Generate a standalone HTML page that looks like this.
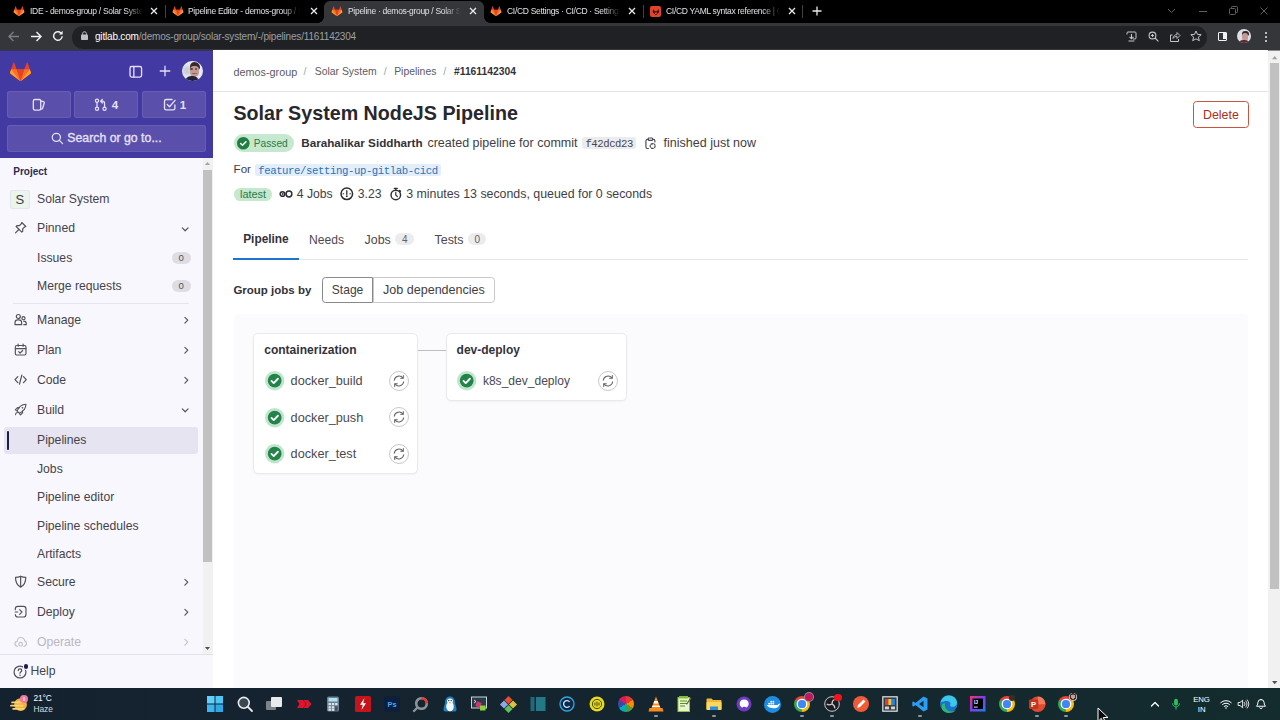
<!DOCTYPE html>
<html>
<head>
<meta charset="utf-8">
<title>Pipeline</title>
<style>
*{box-sizing:border-box;margin:0;padding:0}
html,body{width:1280px;height:720px;overflow:hidden;background:#fff;font-family:"Liberation Sans",sans-serif;}
body{position:relative}
.abs{position:absolute}
.t{position:absolute;white-space:nowrap;line-height:1;}
svg{position:absolute;overflow:visible}
/* ---------- browser chrome ---------- */
#tabbar{left:0;top:0;width:1280px;height:23px;background:#000}
#toolbar{left:0;top:23px;width:1280px;height:27px;background:#35363a}
#urlpill{left:72px;top:26px;width:1135px;height:22.5px;border-radius:11.25px;background:#202124}
.tab{position:absolute;top:0;height:23px;color:#dadce0;font-size:9px;letter-spacing:-0.1px}
.tab .tt{position:absolute;left:30px;top:7px;white-space:nowrap;overflow:hidden;line-height:10px;height:11px}
.tab .x{position:absolute;top:6px;width:9px;height:9px}
.tabsep{position:absolute;top:5px;width:1px;height:13px;background:#3f4145}
/* ---------- sidebar ---------- */
#sbtop{left:0;top:50px;width:213px;height:107.5px;background:#4339a3}
#sbbody{left:0;top:157.5px;width:213px;height:530.5px;background:#f8f7fe}
.sbbtn{position:absolute;background:#5a50ab;border-radius:3px;box-shadow:inset 0 0 0 1px #675eb3}
.nav{position:absolute;left:37px;font-size:13.5px;color:#45434b;white-space:nowrap;line-height:1}
.chev{position:absolute;left:180px}
/* ---------- main ---------- */
#main{left:213px;top:50px;width:1055px;height:638px;background:#fff}
/* ---------- taskbar ---------- */
#taskbar{left:0;top:688px;width:1280px;height:32px;background:linear-gradient(90deg,#14222f 0%,#15252f 50%,#142c2e 100%)}
</style>
</head>
<body>
<!-- BROWSER CHROME -->
<div id="tabbar" class="abs"></div>
<div id="toolbar" class="abs"></div>
<div id="urlpill" class="abs"></div>
<div class="abs" style="left:324px;top:1px;width:160px;height:22px;background:#35363a;border-radius:6px 6px 0 0"></div>
<div class="abs" style="left:318px;top:17px;width:6px;height:6px;background:radial-gradient(circle at 0 0,#000 5.5px,#35363a 6px)"></div>
<div class="abs" style="left:484px;top:17px;width:6px;height:6px;background:radial-gradient(circle at 100% 0,#000 5.5px,#35363a 6px)"></div>
<svg style="left:13px;top:5px" width="12" height="12" viewBox="0 0 24 24"><path d="M12 22.5L1.2 14.3 2.6 9.6 4.9 2.6c.1-.4.7-.4.8 0l2.4 7h7.8l2.4-7c.1-.4.7-.4.8 0l2.3 7 1.4 4.7z" fill="#e24329"/><path d="M12 22.5l4-12.9H8z" fill="#e24329"/><path d="M12 22.5L8 9.6H2.6zM12 22.5l4-12.9h5.4z" fill="#fc6d26"/><path d="M2.6 9.6L1.2 14.3 12 22.5zM21.4 9.6l1.4 4.7L12 22.5z" fill="#fca326"/></svg>
<div class="t" style="left:30px;top:6px;width:113px;overflow:hidden;font-size:8.5px;line-height:11px;height:12px;color:#dfe1e5;letter-spacing:-0.3px;-webkit-mask-image:linear-gradient(90deg,#000 85%,transparent 100%)">IDE - demos-group / Solar System</div>
<svg style="left:150px;top:7px" width="8" height="8" viewBox="0 0 8 8"><path d="M1 1l6 6M7 1l-6 6" stroke="#e8eaed" stroke-width="1.3" fill="none"/></svg>
<svg style="left:172px;top:5px" width="12" height="12" viewBox="0 0 24 24"><path d="M12 22.5L1.2 14.3 2.6 9.6 4.9 2.6c.1-.4.7-.4.8 0l2.4 7h7.8l2.4-7c.1-.4.7-.4.8 0l2.3 7 1.4 4.7z" fill="#e24329"/><path d="M12 22.5l4-12.9H8z" fill="#e24329"/><path d="M12 22.5L8 9.6H2.6zM12 22.5l4-12.9h5.4z" fill="#fc6d26"/><path d="M2.6 9.6L1.2 14.3 12 22.5zM21.4 9.6l1.4 4.7L12 22.5z" fill="#fca326"/></svg>
<div class="t" style="left:188px;top:6px;width:112px;overflow:hidden;font-size:8.5px;line-height:11px;height:12px;color:#dfe1e5;letter-spacing:-0.3px;-webkit-mask-image:linear-gradient(90deg,#000 85%,transparent 100%)">Pipeline Editor - demos-group / Solar</div>
<svg style="left:310px;top:7px" width="8" height="8" viewBox="0 0 8 8"><path d="M1 1l6 6M7 1l-6 6" stroke="#e8eaed" stroke-width="1.3" fill="none"/></svg>
<svg style="left:331px;top:5px" width="12" height="12" viewBox="0 0 24 24"><path d="M12 22.5L1.2 14.3 2.6 9.6 4.9 2.6c.1-.4.7-.4.8 0l2.4 7h7.8l2.4-7c.1-.4.7-.4.8 0l2.3 7 1.4 4.7z" fill="#e24329"/><path d="M12 22.5l4-12.9H8z" fill="#e24329"/><path d="M12 22.5L8 9.6H2.6zM12 22.5l4-12.9h5.4z" fill="#fc6d26"/><path d="M2.6 9.6L1.2 14.3 12 22.5zM21.4 9.6l1.4 4.7L12 22.5z" fill="#fca326"/></svg>
<div class="t" style="left:348px;top:6px;width:113px;overflow:hidden;font-size:8.5px;line-height:11px;height:12px;color:#dfe1e5;letter-spacing:-0.3px;-webkit-mask-image:linear-gradient(90deg,#000 85%,transparent 100%)">Pipeline · demos-group / Solar System</div>
<svg style="left:469px;top:7px" width="8" height="8" viewBox="0 0 8 8"><path d="M1 1l6 6M7 1l-6 6" stroke="#e8eaed" stroke-width="1.3" fill="none"/></svg>
<svg style="left:490px;top:5px" width="12" height="12" viewBox="0 0 24 24"><path d="M12 22.5L1.2 14.3 2.6 9.6 4.9 2.6c.1-.4.7-.4.8 0l2.4 7h7.8l2.4-7c.1-.4.7-.4.8 0l2.3 7 1.4 4.7z" fill="#e24329"/><path d="M12 22.5l4-12.9H8z" fill="#e24329"/><path d="M12 22.5L8 9.6H2.6zM12 22.5l4-12.9h5.4z" fill="#fc6d26"/><path d="M2.6 9.6L1.2 14.3 12 22.5zM21.4 9.6l1.4 4.7L12 22.5z" fill="#fca326"/></svg>
<div class="t" style="left:507px;top:6px;width:113px;overflow:hidden;font-size:8.5px;line-height:11px;height:12px;color:#dfe1e5;letter-spacing:-0.3px;-webkit-mask-image:linear-gradient(90deg,#000 85%,transparent 100%)">CI/CD Settings · CI/CD · Settings · d</div>
<svg style="left:628px;top:7px" width="8" height="8" viewBox="0 0 8 8"><path d="M1 1l6 6M7 1l-6 6" stroke="#e8eaed" stroke-width="1.3" fill="none"/></svg>
<div class="t" style="left:666px;top:6px;width:114px;overflow:hidden;font-size:8.5px;line-height:11px;height:12px;color:#dfe1e5;letter-spacing:-0.3px;-webkit-mask-image:linear-gradient(90deg,#000 85%,transparent 100%)">CI/CD YAML syntax reference | GitLab</div>
<svg style="left:788px;top:7px" width="8" height="8" viewBox="0 0 8 8"><path d="M1 1l6 6M7 1l-6 6" stroke="#e8eaed" stroke-width="1.3" fill="none"/></svg>
<div class="abs" style="left:650px;top:6px;width:11px;height:11px;background:#e24329;border-radius:2px"></div>
<svg style="left:651.6px;top:7.6px" width="7.8" height="7.8" viewBox="0 0 24 24"><path d="M12 22L2 12 4 3l4 7h8l4-7 2 9z" fill="#3a0f08"/><path d="M12 20l-4-6h8z" fill="#f26a4f"/></svg>
<div class="tabsep" style="left:165px"></div>
<div class="tabsep" style="left:643px"></div>
<div class="tabsep" style="left:802px"></div>
<svg style="left:812px;top:6px" width="10" height="10" viewBox="0 0 10 10"><path d="M5 0.5v9M0.5 5h9" stroke="#e8eaed" stroke-width="1.3"/></svg>
<svg style="left:1167px;top:8px" width="9" height="6" viewBox="0 0 9 6"><path d="M1 1l3.5 3.5L8 1" stroke="#5f6368" stroke-width="1" fill="none"/></svg>
<div class="abs" style="left:1199px;top:11px;width:8px;height:1px;background:#5c5f64"></div>
<svg style="left:1229px;top:6px" width="9" height="9" viewBox="0 0 9 9"><rect x="0.5" y="2.5" width="6" height="6" rx="1" stroke="#5c5f64" fill="none"/><path d="M2.5 2.5v-1.2a.8.8 0 0 1 .8-.8h4.4a.8.8 0 0 1 .8.8v4.4a.8.8 0 0 1-.8.8H6.5" stroke="#5c5f64" fill="none"/></svg>
<svg style="left:1260px;top:7px" width="8" height="8" viewBox="0 0 8 8"><path d="M0.5 0.5l7 7M7.5 0.5l-7 7" stroke="#5c5f64" stroke-width="1" fill="none"/></svg>
<svg style="left:8px;top:31px" width="12" height="11" viewBox="0 0 12 11"><path d="M11 5.5H1.5M5.5 1L1 5.5 5.5 10" stroke="#7a7d82" stroke-width="1.4" fill="none"/></svg>
<svg style="left:30px;top:31px" width="12" height="11" viewBox="0 0 12 11"><path d="M1 5.5h9.5M6.5 1L11 5.5 6.5 10" stroke="#f1f3f4" stroke-width="1.4" fill="none"/></svg>
<svg style="left:52px;top:30px" width="12" height="12" viewBox="0 0 12 12"><path d="M10.2 6.2A4.3 4.3 0 1 1 8.9 2.9" stroke="#f1f3f4" stroke-width="1.4" fill="none"/><path d="M10.6 0.8v3.6H7z" fill="#f1f3f4"/></svg>
<svg style="left:81px;top:31px" width="7" height="9" viewBox="0 0 7 9"><rect x="0" y="3.6" width="7" height="5.4" rx="0.8" fill="#bdc1c6"/><path d="M1.6 4V2.6a1.9 1.9 0 0 1 3.8 0V4" stroke="#bdc1c6" stroke-width="1" fill="none"/></svg>
<div class="t" id="url" style="left:95px;top:31px;font-size:10px;line-height:12px;color:#9aa0a6;letter-spacing:-0.19px"><span style="color:#fff">gitlab.com</span>/demos-group/solar-system/-/pipelines/1161142304</div>
<svg style="left:1126px;top:31px" width="11" height="11" viewBox="0 0 11 11"><path d="M1 3.5V2a1 1 0 0 1 1-1h7a1 1 0 0 1 1 1v5a1 1 0 0 1-1 1H7" stroke="#c4c7c5" fill="none"/><path d="M5.5 3v4.5M3.5 5.8l2 2 2-2M2.5 10h6" stroke="#c4c7c5" stroke-width="1.1" fill="none"/></svg>
<svg style="left:1148px;top:31px" width="11" height="11" viewBox="0 0 11 11"><circle cx="4.5" cy="4.5" r="3.4" stroke="#c4c7c5" stroke-width="1.1" fill="none"/><path d="M7 7l3.4 3.4M3 4.5h3M4.5 3v3" stroke="#c4c7c5" stroke-width="1.1"/></svg>
<svg style="left:1169px;top:31px" width="12" height="11" viewBox="0 0 12 11"><path d="M3.5 4H1.5v6.5h8V8" stroke="#c4c7c5" fill="none"/><path d="M4 7.5C4.3 5 6 3.6 8 3.6V1.5l3 3-3 3V5.4C6.3 5.4 5 6 4 7.5z" stroke="#c4c7c5" stroke-width="0.9" fill="none"/></svg>
<svg style="left:1190px;top:30px" width="12" height="12" viewBox="0 0 12 12"><path d="M6 1l1.5 3.4 3.7.3-2.8 2.4.9 3.6L6 8.8 2.7 10.7l.9-3.6L.8 4.7l3.7-.3z" stroke="#c4c7c5" stroke-width="1" fill="none" stroke-linejoin="round"/></svg>
<div class="abs" style="left:1218px;top:32px;width:9px;height:9px;border:1.5px solid #f1f3f4;border-radius:1px"><div style="position:absolute;right:0;top:0;width:3px;height:6px;background:#f1f3f4"></div></div>
<div class="abs" style="left:1237px;top:29px;width:14.4px;height:14.4px;border-radius:7.2px;overflow:hidden;background:#dcdfe6"><div style="position:absolute;left:5px;top:1.6px;width:7.4px;height:5.6px;border-radius:3.5px 4px 2px 2px;background:#3a2b2b"></div><div style="position:absolute;left:5.4px;top:4.2px;width:6px;height:7.6px;border-radius:3px;background:#c49a96"></div><div style="position:absolute;left:2.4px;top:10.8px;width:10px;height:6px;border-radius:4px 4px 0 0;background:#5a2a35"></div></div>
<div class="abs" style="left:1265px;top:32px;width:2px;height:2px;border-radius:1px;background:#e8eaed"></div>
<div class="abs" style="left:1265px;top:36px;width:2px;height:2px;border-radius:1px;background:#e8eaed"></div>
<div class="abs" style="left:1265px;top:40px;width:2px;height:2px;border-radius:1px;background:#e8eaed"></div>
<!-- CHROME-CONTENT -->

<!-- SIDEBAR -->
<div id="sbtop" class="abs"></div>
<div id="sbbody" class="abs"></div>
<div class="abs" style="left:0;top:50px;width:1280px;height:1px;background:#2a2b2e;opacity:.55"></div>
<svg style="left:9px;top:59.5px" width="23" height="23" viewBox="0 0 24 24"><path d="M12 22.2L1.6 14.4c-.5-.4-.7-1-.5-1.6L4.6 2.9c.15-.45.8-.45.95 0L7.9 9.6h8.2l2.35-6.7c.15-.45.8-.45.95 0l3.5 9.9c.2.6 0 1.2-.5 1.6z" fill="#e24329"/><path d="M12 22.2L7.9 9.6h8.2z" fill="#e24329"/><path d="M12 22.2L7.9 9.6H2.4zM12 22.2l4.1-12.6h5.5z" fill="#fc6d26"/><path d="M2.4 9.6L1.1 12.8c-.2.6 0 1.2.5 1.6L12 22.2zM21.6 9.6l1.3 3.2c.2.6 0 1.2-.5 1.6L12 22.2z" fill="#fca326"/></svg>
<svg style="left:129.3px;top:64.8px;" width="13.6" height="13.6" viewBox="0 0 16 16" fill="none" stroke="#e4e0f7" stroke-width="1.6" stroke-linecap="round" stroke-linejoin="round"><rect x="1.2" y="1.8" width="13.6" height="12.4" rx="2"/><path d="M5.7 2v12"/></svg>
<svg style="left:158.8px;top:65.4px;" width="12" height="12" viewBox="0 0 16 16" fill="none" stroke="#e4e0f7" stroke-width="1.7" stroke-linecap="round" stroke-linejoin="round"><path d="M8 1.6v12.8M1.6 8h12.8"/></svg>
<div class="abs" style="left:182.4px;top:60.7px;width:20.3px;height:20.3px;border-radius:10.2px;overflow:hidden;background:#e6eaf3"><div style="position:absolute;inset:0;filter:blur(.45px)"><div style="position:absolute;left:1px;top:5px;width:8px;height:9px;border-radius:4px;background:#c9d0d4;filter:blur(1px)"></div><div style="position:absolute;left:7.2px;top:1.8px;width:10.6px;height:8px;border-radius:5px 6px 3px 3px;background:#3a2b2b"></div><div style="position:absolute;left:7.6px;top:5.6px;width:8.6px;height:11px;border-radius:4px 4px 4.5px 4.5px;background:#c49a96"></div><div style="position:absolute;left:9.6px;top:12px;width:4.6px;height:1.7px;border-radius:1px 1px 2px 2px;background:#9a5c5c"></div><div style="position:absolute;left:3px;top:15.2px;width:14px;height:8px;border-radius:6px 6px 0 0;background:#22233a"></div><div style="position:absolute;left:8px;top:7.8px;width:2.4px;height:1.4px;background:#5b4040;border-radius:1px"></div><div style="position:absolute;left:12.6px;top:7.8px;width:2.4px;height:1.4px;background:#5b4040;border-radius:1px"></div></div></div>
<div class="sbbtn" style="left:7px;top:91px;width:64px;height:27px"></div>
<div class="sbbtn" style="left:74.3px;top:91px;width:64px;height:27px"></div>
<div class="sbbtn" style="left:142px;top:91px;width:64px;height:27px"></div>
<div class="sbbtn" style="left:7px;top:124.5px;width:199px;height:27px"></div>
<svg style="left:32px;top:98px;" width="13.4" height="13.4" viewBox="0 0 16 16" fill="none" stroke="#e4e0f7" stroke-width="1.6" stroke-linecap="round" stroke-linejoin="round"><rect x="1.6" y="1.8" width="8.8" height="12.6" rx="1.8"/><path d="M10.6 3.6l3 .7c.8.2 1.2.9 1 1.7l-1.9 6.3c-.3.8-1 1.2-1.9 1"/></svg>
<svg style="left:94px;top:98px;" width="13.4" height="13.4" viewBox="0 0 16 16" fill="none" stroke="#e4e0f7" stroke-width="1.5" stroke-linecap="round" stroke-linejoin="round"><circle cx="3.6" cy="3.2" r="1.9"/><circle cx="3.6" cy="12.8" r="1.9"/><circle cx="12.6" cy="12.8" r="1.9"/><path d="M3.6 5.2v5.6M12.6 10.8V6.4c0-1.6-1-2.6-2.6-2.6H8.2M10 1.6L7.8 3.8 10 6"/></svg>
<div class="t" style="left:111.8px;top:98.6px;font-size:11.6px;font-weight:700;color:#e4e0f7">4</div>
<svg style="left:163px;top:98px;" width="13.4" height="13.4" viewBox="0 0 16 16" fill="none" stroke="#e4e0f7" stroke-width="1.6" stroke-linecap="round" stroke-linejoin="round"><path d="M14.2 8.2v4c0 1.2-.8 2-2 2H3.8c-1.2 0-2-.8-2-2V3.8c0-1.2.8-2 2-2h7"/><path d="M5 7.6l2.8 2.8 6.6-7.6"/></svg>
<div class="t" style="left:179.8px;top:98.6px;font-size:11.6px;font-weight:700;color:#e4e0f7">1</div>
<svg style="left:51.3px;top:131.6px;" width="12.6" height="12.6" viewBox="0 0 16 16" fill="none" stroke="#e4e0f7" stroke-width="1.6" stroke-linecap="round" stroke-linejoin="round"><circle cx="6.8" cy="6.8" r="5.2"/><path d="M10.7 10.7l4 4"/></svg>
<div class="t" id="srch" style="left:67.3px;top:132.2px;font-size:12.3px;color:#e4e0f7;-webkit-text-stroke:0.35px #e4e0f7">Search or go to...</div>
<div class="t" id="proj" style="left:13.3px;top:166.6px;font-size:10px;font-weight:700;color:#2b2a55">Project</div>
<div class="abs" style="left:10.3px;top:189.8px;width:19.6px;height:19.6px;border-radius:3px;background:#ecf4ee;box-shadow:inset 0 0 0 1px #e3e6ea"></div>
<div class="t" style="left:15.4px;top:193.3px;font-size:13px;color:#3a3d40">S</div>
<div class="nav"  style="top:192.9px;font-size:12.2px;color:#45434b">Solar System</div>
<div class="nav"  style="top:221.9px;font-size:12.2px;color:#45434b">Pinned</div>
<div class="nav"  style="top:251.9px;font-size:12.2px;color:#45434b">Issues</div>
<div class="nav"  style="top:279.9px;font-size:12.2px;color:#45434b">Merge requests</div>
<div class="abs" style="left:4px;top:427px;width:194px;height:26.5px;border-radius:3px;background:#e6e4f0"></div>
<div class="abs" style="left:6.8px;top:430.5px;width:2.6px;height:19.5px;border-radius:1.3px;background:#1d1b52"></div>
<div class="nav"  style="top:313.9px;font-size:12.2px;color:#45434b">Manage</div>
<div class="nav"  style="top:343.9px;font-size:12.2px;color:#45434b">Plan</div>
<div class="nav"  style="top:373.9px;font-size:12.2px;color:#45434b">Code</div>
<div class="nav"  style="top:403.9px;font-size:12.2px;color:#45434b">Build</div>
<div class="nav"  style="top:434.4px;font-size:12.2px;color:#45434b">Pipelines</div>
<div class="nav"  style="top:462.5px;font-size:12.2px;color:#45434b">Jobs</div>
<div class="nav"  style="top:490.5px;font-size:12.2px;color:#45434b">Pipeline editor</div>
<div class="nav"  style="top:519.6px;font-size:12.2px;color:#45434b">Pipeline schedules</div>
<div class="nav"  style="top:547.5px;font-size:12.2px;color:#45434b">Artifacts</div>
<div class="nav"  style="top:575.9px;font-size:12.2px;color:#45434b">Secure</div>
<div class="nav"  style="top:605.9px;font-size:12.2px;color:#45434b">Deploy</div>
<div class="nav"  style="top:635.9px;font-size:12.2px;color:#bab8c2">Operate</div>
<div class="abs" style="left:172px;top:252px;width:18.6px;height:12.2px;border-radius:6.1px;background:#dfdde4"></div>
<div class="t" style="left:178.6px;top:253.4px;font-size:9.6px;color:#535158">0</div>
<div class="abs" style="left:172px;top:280px;width:18.6px;height:12.2px;border-radius:6.1px;background:#dfdde4"></div>
<div class="t" style="left:178.6px;top:281.4px;font-size:9.6px;color:#535158">0</div>
<div class="abs" style="left:12.5px;top:302.6px;width:176px;height:1px;background:#e6e4ee"></div>
<svg style="left:180.6px;top:224.6px;" width="8.4" height="8.4" viewBox="0 0 16 16" fill="none" stroke="#535158" stroke-width="2.2" stroke-linecap="round" stroke-linejoin="round"><path d="M2.5 5.5L8 11l5.5-5.5"/></svg>
<svg style="left:180.6px;top:406.4px;" width="8.4" height="8.4" viewBox="0 0 16 16" fill="none" stroke="#535158" stroke-width="2.2" stroke-linecap="round" stroke-linejoin="round"><path d="M2.5 5.5L8 11l5.5-5.5"/></svg>
<svg style="left:181.8px;top:315.8px;" width="8.4" height="8.4" viewBox="0 0 16 16" fill="none" stroke="#535158" stroke-width="2.2" stroke-linecap="round" stroke-linejoin="round"><path d="M5.5 2.5L11 8l-5.5 5.5"/></svg>
<svg style="left:181.8px;top:345.8px;" width="8.4" height="8.4" viewBox="0 0 16 16" fill="none" stroke="#535158" stroke-width="2.2" stroke-linecap="round" stroke-linejoin="round"><path d="M5.5 2.5L11 8l-5.5 5.5"/></svg>
<svg style="left:181.8px;top:375.8px;" width="8.4" height="8.4" viewBox="0 0 16 16" fill="none" stroke="#535158" stroke-width="2.2" stroke-linecap="round" stroke-linejoin="round"><path d="M5.5 2.5L11 8l-5.5 5.5"/></svg>
<svg style="left:181.8px;top:577.8px;" width="8.4" height="8.4" viewBox="0 0 16 16" fill="none" stroke="#535158" stroke-width="2.2" stroke-linecap="round" stroke-linejoin="round"><path d="M5.5 2.5L11 8l-5.5 5.5"/></svg>
<svg style="left:181.8px;top:607.8px;" width="8.4" height="8.4" viewBox="0 0 16 16" fill="none" stroke="#535158" stroke-width="2.2" stroke-linecap="round" stroke-linejoin="round"><path d="M5.5 2.5L11 8l-5.5 5.5"/></svg>
<svg style="left:181.8px;top:637.8px;" width="8.4" height="8.4" viewBox="0 0 16 16" fill="none" stroke="#c4c2cc" stroke-width="2.2" stroke-linecap="round" stroke-linejoin="round"><path d="M5.5 2.5L11 8l-5.5 5.5"/></svg>
<svg style="left:13.6px;top:221.2px;" width="13.3" height="13.3" viewBox="0 0 16 16" fill="none" stroke="#535158" stroke-width="1.4" stroke-linecap="round" stroke-linejoin="round"><path d="M9.4 1.8l4.8 4.8-1.5.6-2.3 2.3.2 2.7-1.2 1.2-6.8-6.8 1.2-1.2 2.7.2 2.3-2.3zM5.8 10.2L1.8 14.2"/></svg>
<svg style="left:13.6px;top:313.4px;" width="13.3" height="13.3" viewBox="0 0 16 16" fill="none" stroke="#535158" stroke-width="1.4" stroke-linecap="round" stroke-linejoin="round"><circle cx="5.2" cy="4.2" r="2.4"/><path d="M1.2 14v-2.4c0-2 1.4-3.4 3.4-3.4h1.2c2 0 3.4 1.4 3.4 3.4V14z"/><circle cx="11.4" cy="6.2" r="1.9"/><path d="M11.6 9.8c1.9 0 3.2 1.2 3.2 3V14h-3"/></svg>
<svg style="left:13.6px;top:343.4px;" width="13.3" height="13.3" viewBox="0 0 16 16" fill="none" stroke="#535158" stroke-width="1.4" stroke-linecap="round" stroke-linejoin="round"><rect x="1.6" y="3" width="12.8" height="11.4" rx="1.8"/><path d="M1.8 6.8h12.4M5 1.4v2.6M11 1.4v2.6M5.6 10.4l1.7 1.7 3.1-3.1"/></svg>
<svg style="left:13.6px;top:373.4px;" width="13.3" height="13.3" viewBox="0 0 16 16" fill="none" stroke="#535158" stroke-width="1.5" stroke-linecap="round" stroke-linejoin="round"><path d="M4.6 4.4L1.2 8l3.4 3.6M11.4 4.4L14.8 8l-3.4 3.6M9.4 2.6L6.6 13.4"/></svg>
<svg style="left:13.6px;top:403.4px;" width="13.3" height="13.3" viewBox="0 0 16 16" fill="none" stroke="#535158" stroke-width="1.3" stroke-linecap="round" stroke-linejoin="round"><path d="M6.2 12.2c4.6-1.6 8-5.2 8.2-10.6C9 1.8 5.4 5.2 3.8 9.8zM3.8 9.8L1.6 8.2l2.6-2.6 2.4.4M6.2 12.2l1.6 2.2 2.6-2.6-.4-2.4M1.8 14.2c.2-1.6.8-2.6 2-2.8"/><circle cx="10.2" cy="5.8" r="1" fill="#535158" stroke="none"/></svg>
<svg style="left:13.6px;top:575.4px;" width="13.3" height="13.3" viewBox="0 0 16 16" fill="none" stroke="#535158" stroke-width="1.4" stroke-linecap="round" stroke-linejoin="round"><path d="M8 1.4c2 1 4 1.4 6.2 1.4 0 5.4-1.6 9.6-6.2 11.8C3.400 12.4 1.8 8.200 1.8 2.800 4 2.800 6 2.400 8 1.400zM8 2v12"/></svg>
<svg style="left:13.6px;top:605.4px;" width="13.3" height="13.3" viewBox="0 0 16 16" fill="none" stroke="#535158" stroke-width="1.4" stroke-linecap="round" stroke-linejoin="round"><path d="M1.6 5.600V4.600c0-1.800 1.200-3 3-3h6.800c1.800 0 3 1.200 3 3v6.800c0 1.800-1.200 3-3 3H4.600c-1.800 0-3-1.200-3-3"/><path d="M1.4 8.400h3.200M6.800 5.600L9.600 8.400 6.800 11.200"/></svg>
<svg style="left:13.6px;top:635.4px;" width="13.3" height="13.3" viewBox="0 0 16 16" fill="none" stroke="#c4c2cc" stroke-width="1.4" stroke-linecap="round" stroke-linejoin="round"><path d="M4 13.600c-1.800-.2-2.800-1.400-2.800-3 0-1.600 1-2.800 2.600-3C4.200 4.600 6 3 8.200 3c2.400 0 4.200 1.600 4.600 4 1.400.4 2.200 1.600 2.200 3 0 1.800-1.200 3.400-3 3.600"/><circle cx="8" cy="11" r="2.200"/></svg>
<div class="abs" style="left:0;top:654px;width:213px;height:1px;background:#e3e1ec"></div>
<div class="abs" style="left:0;top:655px;width:213px;height:33px;background:#f8f7fe"></div>
<svg style="left:13.4px;top:664.6px;" width="14" height="14" viewBox="0 0 16 16" fill="none" stroke="#535158" stroke-width="1.4" stroke-linecap="round" stroke-linejoin="round"><circle cx="8" cy="8" r="6.800"/><path d="M6 6.400c0-1.200.8-2 2-2s2 .8 2 1.800c0 1.600-2 1.600-2 3.200"/><circle cx="8" cy="11.800" r=".9" fill="#535158" stroke="none"/></svg>
<div class="abs" style="left:23.6px;top:664px;width:4.8px;height:4.8px;border-radius:2.4px;background:#1d1b52;box-shadow:0 0 0 1px #f9f8fd"></div>
<div class="t" id="help" style="left:30.4px;top:664.9px;font-size:12.2px;color:#45434b">Help</div>
<div class="abs" style="left:203px;top:158px;width:9.6px;height:496px;background:#f1f1f1"></div>
<div class="abs" style="left:203.4px;top:169.6px;width:8.2px;height:392px;background:#c1c1c1"></div>
<svg style="left:205px;top:161.6px" width="5" height="3" viewBox="0 0 5 3"><path d="M0 3L2.500 0 5 3z" fill="#a3a3a3"/></svg>
<svg style="left:205px;top:646.6px" width="5" height="3" viewBox="0 0 5 3"><path d="M0 0L2.500 3 5 0z" fill="#505050"/></svg>
<!-- SIDEBAR-CONTENT -->

<!-- MAIN -->
<div id="main" class="abs"></div>
<div class="t" id="bc1" style="left:233.60px;top:66.60px;font-size:10.8px;color:#5c5a63;">demos-group</div>
<div class="t"  style="left:303.6px;top:66.15px;font-size:10.5px;color:#a4a3a8;">/</div>
<div class="t" id="bc2" style="left:314.80px;top:66.80px;font-size:10.4px;color:#5c5a63;">Solar System</div>
<div class="t"  style="left:383.8px;top:66.15px;font-size:10.5px;color:#a4a3a8;">/</div>
<div class="t" id="bc3" style="left:394.20px;top:66.80px;font-size:10.4px;color:#5c5a63;">Pipelines</div>
<div class="t"  style="left:443.2px;top:66.15px;font-size:10.5px;color:#a4a3a8;">/</div>
<div class="t" id="bc4" style="left:454.00px;top:66.85px;font-size:10.3px;color:#33323a;font-weight:700;">#1161142304</div>
<div class="abs" style="left:213px;top:90.6px;width:1055px;height:1px;background:#e4e3e8"></div>
<div class="t" id="title" style="left:233.40px;top:104.35px;font-size:19.7px;color:#28272d;font-weight:700;">Solar System NodeJS Pipeline</div>
<div class="abs" style="left:1193px;top:101.2px;width:55.8px;height:26.8px;border:1px solid #c9553f;border-radius:3.5px;background:#fff"></div>
<div class="t" id="del" style="left:1203px;top:108.60px;font-size:12.4px;color:#ae2e17;">Delete</div>
<div class="abs" style="left:233.6px;top:134px;width:60.4px;height:18.4px;border-radius:9.2px;background:#c5e8cf"></div>
<svg style="left:237.4px;top:136.9px" width="12.6" height="12.6" viewBox="0 0 16 16"><circle cx="8" cy="8" r="8" fill="#1f7e44"/><path d="M4.6 8.2l2.4 2.4 4.4-4.6" stroke="#fff" stroke-width="1.9" fill="none" stroke-linecap="round" stroke-linejoin="round"/></svg>
<div class="t" id="passed" style="left:253.80px;top:139.10px;font-size:10.2px;color:#2c7a48;">Passed</div>
<div class="t" id="bs" style="left:301.2px;top:137.35px;font-size:11.7px;color:#33323a;font-weight:700;">Barahalikar Siddharth</div>
<div class="t" id="cp" style="left:427.4px;top:136.95px;font-size:12.5px;color:#3f3d45;">created pipeline for commit</div>
<div class="abs" style="left:582.4px;top:137.4px;width:54px;height:12px;border-radius:2.5px;background:#ececef"></div>
<div class="t" id="sha" style="left:585.40px;top:138.80px;font-size:10.6px;color:#47454d;font-family:'Liberation Mono',monospace;letter-spacing:-0.42px;">f42dcd23</div>
<svg style="left:644.400px;top:136.800px" width="12.800" height="12.800" viewBox="0 0 16 16" fill="none" stroke="#4a484f" stroke-width="1.450" stroke-linecap="round" stroke-linejoin="round"><path d="M5.200 3H4.200c-1.100 0-1.800.700-1.800 1.800v7.800c0 1.100.700 1.800 1.800 1.800h1.400M10.800 3h1c1.100 0 1.800.700 1.800 1.800v1.400"/><rect x="5.400" y="1.300" width="5.200" height="3" rx=".9"/><circle cx="10.800" cy="11.200" r="3.100" stroke-dasharray="2.300 1.700"/><path d="M9.600 9.400l1.600-1" stroke-width="1.200"/></svg>
<div class="t" id="fin" style="left:663.6px;top:136.95px;font-size:12.5px;color:#3f3d45;">finished just now</div>
<div class="t" id="for" style="left:233.60px;top:163.40px;font-size:11.6px;color:#3f3d45;">For</div>
<div class="abs" style="left:255px;top:164px;width:185.6px;height:11.8px;border-radius:2.5px;background:#e3eefb"></div>
<div class="t" id="br" style="left:258.20px;top:165.85px;font-size:10.7px;color:#2e72b8;font-family:'Liberation Mono',monospace;letter-spacing:-0.43px;">feature/setting-up-gitlab-cicd</div>
<div class="abs" style="left:233.6px;top:187.8px;width:38.6px;height:12.8px;border-radius:6.400px;background:#c5e8cf"></div>
<div class="t" id="latest" style="left:240px;top:188.55px;font-size:10.9px;color:#2c7a48;">latest</div>
<svg style="left:279px;top:187.4px" width="14" height="14" viewBox="0 0 16 16" fill="none" stroke="#2e2d33" stroke-width="1.7" stroke-linecap="round" stroke-linejoin="round"><circle cx="4" cy="8" r="2.700"/><circle cx="4" cy="8" r=".7" fill="#2e2d33" stroke-width=".8"/><circle cx="11.400" cy="8" r="3.300"/></svg>
<div class="t" id="jobs4" style="left:296.8px;top:187.70px;font-size:12.2px;color:#3f3d45;">4 Jobs</div>
<svg style="left:340px;top:187.2px" width="13.6" height="13.600" viewBox="0 0 16 16" fill="none" stroke="#2e2d33" stroke-width="1.800" stroke-linecap="round" stroke-linejoin="round"><circle cx="8" cy="8" r="6.800"/><path d="M8 4.400v4.400" stroke-width="1.500"/><circle cx="8" cy="10.800" r="1.100" fill="#2e2d33" stroke="none"/><path d="M3.600 8h.8M11.600 8h.8" stroke-width="1.200"/></svg>
<div class="t" id="w323" style="left:357.8px;top:187.70px;font-size:12.2px;color:#3f3d45;">3.23</div>
<svg style="left:388.600px;top:186.800px" width="13.600" height="13.600" viewBox="0 0 16 16" fill="none" stroke="#2e2d33" stroke-width="1.700" stroke-linecap="round" stroke-linejoin="round"><circle cx="8" cy="9.400" r="5.600"/><path d="M8 6.400v3.200l1.800 1.600" stroke-width="1.400"/><path d="M6.200 1.600h3.600M8 1.600v2M12.400 4l1.100 1.100" stroke-width="1.600"/></svg>
<div class="t" id="dur" style="left:406.2px;top:187.62px;font-size:12.37px;color:#3f3d45;">3 minutes 13 seconds, queued for 0 seconds</div>
<div class="abs" style="left:233px;top:258.8px;width:1015px;height:1px;background:#e6e5ea"></div>
<div class="abs" style="left:233px;top:257.600px;width:65.6px;height:2px;background:#1f75cb"></div>
<div class="t" id="tb1" style="left:243.20px;top:234.17px;font-size:11.86px;color:#33323a;font-weight:700;">Pipeline</div>
<div class="t" id="tb2" style="left:309.00px;top:234.05px;font-size:12.1px;color:#4b4951;">Needs</div>
<div class="t" id="tb3" style="left:364.60px;top:233.90px;font-size:12.4px;color:#4b4951;">Jobs</div>
<div class="abs" style="left:395.4px;top:233.300px;width:18.8px;height:11.6px;border-radius:5.800px;background:#ececef"></div>
<div class="t"  style="left:402px;top:234.7px;font-size:10px;color:#626168;">4</div>
<div class="t" id="tb4" style="left:434.60px;top:233.90px;font-size:12.4px;color:#4b4951;">Tests</div>
<div class="abs" style="left:468px;top:233.300px;width:18.4px;height:11.6px;border-radius:5.800px;background:#ececef"></div>
<div class="t"  style="left:474.4px;top:234.7px;font-size:10px;color:#626168;">0</div>
<div class="t" id="gjb" style="left:233.4px;top:284.55px;font-size:11.5px;color:#33323a;font-weight:700;">Group jobs by</div>
<div class="abs" style="left:372.600px;top:276.800px;width:122px;height:26.2px;border:1px solid #c9c8ce;border-radius:0 3.500px 3.500px 0;background:#fff"></div>
<div class="abs" style="left:322.400px;top:276.800px;width:50.8px;height:26.2px;border:1.400px solid #89888d;border-radius:3.500px 0 0 3.500px;background:#fff"></div>
<div class="t" id="stage" style="left:331.8px;top:284.38px;font-size:12.05px;color:#3f3d45;">Stage</div>
<div class="t" id="jd" style="left:383px;top:284.12px;font-size:12.55px;color:#3f3d45;">Job dependencies</div>
<div class="abs" style="left:233.600px;top:314px;width:1014.8px;height:380px;border-radius:4px;background:#fbfafd"></div>
<div class="abs" style="left:418px;top:349.900px;width:28px;height:1px;background:#bfbec5"></div>
<div class="abs" style="left:253.300px;top:333.400px;width:165px;height:140.600px;border:1px solid #eae9ee;border-radius:5px;background:#fff;box-shadow:0 1px 2px rgba(31,30,36,.04)"></div>
<div class="abs" style="left:445.800px;top:333.400px;width:181.600px;height:67.5px;border:1px solid #eae9ee;border-radius:5px;background:#fff;box-shadow:0 1px 2px rgba(31,30,36,.04)"></div>
<div class="t" id="st1" style="left:264.20px;top:344.35px;font-size:12.05px;color:#33323a;font-weight:700;">containerization</div>
<div class="t" id="st2" style="left:456.60px;top:344.30px;font-size:12px;color:#33323a;font-weight:700;">dev-deploy</div>
<svg style="left:264.5px;top:370.8px" width="19.4" height="19.4" viewBox="0 0 20 20"><circle cx="10" cy="10" r="10" fill="#bfe6cb"/><circle cx="10" cy="10" r="7.100" fill="#24834a"/><path d="M6.700 10.200l2.300 2.300 4.300-4.500" stroke="#fff" stroke-width="1.900" fill="none" stroke-linecap="round" stroke-linejoin="round"/></svg>
<div class="t" id="j_docker_build" style="left:290.60px;top:375.07px;font-size:12.7px;color:#4b4951;">docker_build</div>
<svg style="left:389.3px;top:370.5px" width="20" height="20" viewBox="0 0 20 20"><circle cx="10" cy="10" r="9.500" fill="#fff" stroke="#c8c7cc" stroke-width="1"/><g stroke="#626168" stroke-width="1.050" fill="none" stroke-linecap="round" stroke-linejoin="round"><path d="M5.300 9.200a4.800 4.800 0 0 1 8.600-2.200M14.700 10.800a4.800 4.800 0 0 1-8.600 2.200"/><path d="M14.300 4.600V7.200h-2.600M5.700 15.400V12.800h2.600"/></g></svg>
<svg style="left:264.5px;top:407.5px" width="19.4" height="19.4" viewBox="0 0 20 20"><circle cx="10" cy="10" r="10" fill="#bfe6cb"/><circle cx="10" cy="10" r="7.100" fill="#24834a"/><path d="M6.700 10.200l2.300 2.300 4.300-4.500" stroke="#fff" stroke-width="1.900" fill="none" stroke-linecap="round" stroke-linejoin="round"/></svg>
<div class="t" id="j_docker_push" style="left:290.60px;top:411.77px;font-size:12.7px;color:#4b4951;">docker_push</div>
<svg style="left:389.3px;top:407.2px" width="20" height="20" viewBox="0 0 20 20"><circle cx="10" cy="10" r="9.500" fill="#fff" stroke="#c8c7cc" stroke-width="1"/><g stroke="#626168" stroke-width="1.050" fill="none" stroke-linecap="round" stroke-linejoin="round"><path d="M5.300 9.200a4.800 4.800 0 0 1 8.600-2.200M14.700 10.800a4.800 4.800 0 0 1-8.600 2.200"/><path d="M14.300 4.600V7.200h-2.600M5.700 15.400V12.800h2.600"/></g></svg>
<svg style="left:264.5px;top:444.0px" width="19.4" height="19.4" viewBox="0 0 20 20"><circle cx="10" cy="10" r="10" fill="#bfe6cb"/><circle cx="10" cy="10" r="7.100" fill="#24834a"/><path d="M6.700 10.200l2.300 2.300 4.300-4.500" stroke="#fff" stroke-width="1.900" fill="none" stroke-linecap="round" stroke-linejoin="round"/></svg>
<div class="t" id="j_docker_test" style="left:290.60px;top:448.27px;font-size:12.7px;color:#4b4951;">docker_test</div>
<svg style="left:389.3px;top:443.7px" width="20" height="20" viewBox="0 0 20 20"><circle cx="10" cy="10" r="9.500" fill="#fff" stroke="#c8c7cc" stroke-width="1"/><g stroke="#626168" stroke-width="1.050" fill="none" stroke-linecap="round" stroke-linejoin="round"><path d="M5.300 9.200a4.800 4.800 0 0 1 8.600-2.200M14.700 10.800a4.800 4.800 0 0 1-8.600 2.200"/><path d="M14.300 4.600V7.200h-2.600M5.700 15.400V12.800h2.600"/></g></svg>
<svg style="left:456.5px;top:370.8px" width="19.4" height="19.4" viewBox="0 0 20 20"><circle cx="10" cy="10" r="10" fill="#bfe6cb"/><circle cx="10" cy="10" r="7.100" fill="#24834a"/><path d="M6.700 10.200l2.300 2.300 4.300-4.500" stroke="#fff" stroke-width="1.900" fill="none" stroke-linecap="round" stroke-linejoin="round"/></svg>
<div class="t" id="j_k8s" style="left:482.90px;top:375.28px;font-size:12.05px;color:#4b4951;">k8s_dev_deploy</div>
<svg style="left:598px;top:370.5px" width="20" height="20" viewBox="0 0 20 20"><circle cx="10" cy="10" r="9.500" fill="#fff" stroke="#c8c7cc" stroke-width="1"/><g stroke="#626168" stroke-width="1.050" fill="none" stroke-linecap="round" stroke-linejoin="round"><path d="M5.300 9.200a4.800 4.800 0 0 1 8.600-2.200M14.700 10.800a4.800 4.800 0 0 1-8.600 2.200"/><path d="M14.300 4.600V7.200h-2.600M5.700 15.400V12.800h2.600"/></g></svg>
<div class="abs" style="left:1268px;top:51px;width:12px;height:637px;background:#f1f1f1"></div>
<div class="abs" style="left:1269.600px;top:62.600px;width:9px;height:526px;background:#c1c1c1"></div>
<svg style="left:1271.500px;top:55.600px" width="5.400" height="3.200" viewBox="0 0 5 3"><path d="M0 3L2.500 0 5 3z" fill="#a3a3a3"/></svg>
<svg style="left:1271.500px;top:680.600px" width="5.400" height="3.200" viewBox="0 0 5 3"><path d="M0 0L2.500 3 5 0z" fill="#505050"/></svg>
<!-- MAIN-CONTENT -->

<!-- TASKBAR -->
<div id="taskbar" class="abs"></div>
<svg style="left:11.0px;top:695.0px" width="17" height="17" viewBox="0 0 16 16"><circle cx="9" cy="9" r="6" fill="#f3b13c"/><path d="M1 7h9M0 10h11M2 13h10" stroke="#f7d37a" stroke-width="1.600" stroke-linecap="round"/><circle cx="12.200" cy="3.800" r="3.800" fill="#f07a9b"/><path d="M12.200 2v3.600" stroke="#fff" stroke-width="1"/></svg>
<div class="t" style="left:33.6px;top:694.4px;font-size:8.4px;color:#fff;letter-spacing:-0.2px">21°C</div>
<div class="t" style="left:33.6px;top:705.200px;font-size:8.400px;color:#d5d9dc;letter-spacing:-0.1px">Haze</div>
<svg style="left:207.0px;top:696.0px" width="16" height="16" viewBox="0 0 16 16"><rect x="0" y="0" width="7.500" height="7.500" fill="#5fd0fb"/><rect x="8.500" y="0" width="7.500" height="7.500" fill="#4cc5f7"/><rect x="0" y="8.500" width="7.500" height="7.500" fill="#3db6f0"/><rect x="8.500" y="8.500" width="7.500" height="7.500" fill="#2fa8e8"/></svg>
<svg style="left:236.5px;top:696.0px" width="16" height="16" viewBox="0 0 16 16"><circle cx="6.800" cy="6.800" r="5.400" fill="#3a4650" stroke="#e9ecee" stroke-width="1.600"/><path d="M11 11l4 4" stroke="#e9ecee" stroke-width="1.800" stroke-linecap="round"/></svg>
<svg style="left:266.0px;top:696.0px" width="16" height="16" viewBox="0 0 16 16"><rect x="0" y="5" width="10" height="9" rx="1" fill="#7c8388"/><rect x="5" y="1" width="11" height="10" rx="1" fill="#e8eaec"/></svg>
<svg style="left:295.5px;top:696.0px" width="16" height="16" viewBox="0 0 16 16"><path d="M1 4h6l3 4-3 4H1l2.500-4zM7.500 4H12l3.500 4L12 12H7.500l3-4z" fill="#e0142c"/></svg>
<svg style="left:324.5px;top:696.0px" width="16" height="16" viewBox="0 0 16 16"><rect x="2" y="0.500" width="12" height="15" rx="1.500" fill="#6d7f8f"/><rect x="3.500" y="2" width="9" height="3.500" fill="#aee3f5"/><g fill="#dfe6ea"><rect x="3.500" y="7" width="2.400" height="2.200"/><rect x="6.800" y="7" width="2.400" height="2.200"/><rect x="10.100" y="7" width="2.400" height="2.200"/><rect x="3.500" y="10.300" width="2.400" height="2.200"/><rect x="6.800" y="10.300" width="2.400" height="2.200"/><rect x="3.500" y="13" width="2.400" height="1.800"/><rect x="6.800" y="13" width="2.400" height="1.800"/></g><rect x="10.100" y="10.300" width="2.400" height="4.500" fill="#3f5262"/></svg>
<svg style="left:354.7px;top:696.0px" width="16" height="16" viewBox="0 0 16 16"><rect x="0" y="0" width="16" height="16" rx="1.500" fill="#c4141c"/><path d="M9.500 2L5 8.800h2.800L6.500 14 11 7.200H8.200z" fill="#fff"/></svg>
<svg style="left:383.7px;top:696.0px" width="16" height="16" viewBox="0 0 16 16"><rect x="0" y="0.500" width="16" height="15" rx="2" fill="#0c1f3f"/><text x="8" y="11.200" font-family="Liberation Sans" font-weight="700" font-size="7.500" fill="#46a8ff" text-anchor="middle">Ps</text></svg>
<svg style="left:413.2px;top:696.0px" width="16" height="16" viewBox="0 0 16 16"><circle cx="8.500" cy="7.500" r="5.300" fill="none" stroke="#8d9398" stroke-width="2.600"/><path d="M8.500 2.200a5.300 5.300 0 0 1 5.300 5.300" fill="none" stroke="#e53935" stroke-width="2.600"/><path d="M4.500 11.500L1 15" stroke="#8d9398" stroke-width="2.400" stroke-linecap="round"/></svg>
<svg style="left:442.0px;top:696.0px" width="16" height="16" viewBox="0 0 16 16"><path d="M8 0.500c3.200 0 5 2.500 5 6 0 2 1.500 4 1.500 7 0 1.500-1 2-2 2H3.500c-1 0-2-.5-2-2 0-3 1.500-5 1.500-7 0-3.500 1.800-6 5-6z" fill="#1e7fc0"/><ellipse cx="8" cy="10.500" rx="3.800" ry="4.800" fill="#f4f6f7"/><ellipse cx="8" cy="5" rx="3" ry="2.600" fill="#f4f6f7"/><circle cx="6.800" cy="4.600" r=".7" fill="#111"/><circle cx="9.200" cy="4.600" r=".7" fill="#111"/><path d="M6.800 6.200h2.400L8 7.800z" fill="#f5a623"/></svg>
<svg style="left:471.2px;top:696.0px" width="16" height="16" viewBox="0 0 16 16"><rect x="0.500" y="1" width="15" height="11" fill="#2a3a48" stroke="#c9d3da" stroke-width="1"/><path d="M3 4l2 1.500L3 7" stroke="#fff" stroke-width=".8" fill="none"/><rect x="5" y="6" width="5" height="5" fill="#d6336c" transform="rotate(20 7.500 8.500)"/><rect x="9" y="9.500" width="5.500" height="5" fill="#8bd13a"/></svg>
<svg style="left:500.2px;top:695.5px" width="17" height="17" viewBox="0 0 16 16"><g transform="rotate(45 8 8)"><rect x="2.300" y="2.300" width="5.400" height="5.400" fill="#e84d31"/><rect x="8.300" y="2.300" width="5.400" height="5.400" fill="#d9c13a"/><rect x="2.300" y="8.300" width="5.400" height="5.400" fill="#8aa9e6"/><rect x="8.300" y="8.300" width="5.400" height="5.400" fill="#5fbf5a"/></g></svg>
<svg style="left:529.7px;top:696.0px" width="16" height="16" viewBox="0 0 16 16"><rect x="0.500" y="1" width="4" height="14" fill="#1f6a78"/><rect x="6" y="1" width="9.500" height="14" fill="#23798a"/></svg>
<svg style="left:559.2px;top:696.0px" width="16" height="16" viewBox="0 0 16 16"><circle cx="8" cy="8" r="7" fill="#0e2a4a" stroke="#35a6de" stroke-width="1.300"/><path d="M10.600 5.800a3.400 3.400 0 1 0 0 4.400" fill="none" stroke="#cfe9f7" stroke-width="1.300"/></svg>
<svg style="left:588.7px;top:696.0px" width="16" height="16" viewBox="0 0 16 16"><circle cx="8" cy="8" r="7.500" fill="#e8dc1f"/><circle cx="8" cy="8" r="4.600" fill="none" stroke="#4a4708" stroke-width="1"/><path d="M6 6.500v3M8 5.500v5M10 6.500v3" stroke="#4a4708" stroke-width="1"/></svg>
<div class="abs" style="left:618px;top:696px;width:16px;height:16px;border-radius:8px;background:conic-gradient(#e53935 0 60deg,#fb8c00 60deg 120deg,#43a047 120deg 180deg,#00acc1 180deg 240deg,#3949ab 240deg 300deg,#d81b60 300deg 360deg)"></div>
<svg style="left:647.6px;top:696.0px" width="16" height="16" viewBox="0 0 16 16"><path d="M8 0.500L12.500 12h-9z" fill="#f58a1f"/><path d="M6.300 5h3.400l.9 2.400H5.400zM4.600 9.400h6.800l.6 1.600H4z" fill="#fff"/><path d="M1.500 12h13l1 3.500h-15z" fill="#f58a1f"/></svg>
<svg style="left:676.0px;top:696.0px" width="16" height="16" viewBox="0 0 16 16"><rect x="2" y="1.500" width="11.500" height="14" fill="#e8f3d2" stroke="#8fbf3f" stroke-width="1"/><path d="M4 5h7M4 7.500h7M4 10h5" stroke="#5a8f22" stroke-width="1"/><path d="M10 8l4.500-6.500 1 .7L11 8.800z" fill="#6b6b1f"/><rect x="3" y="0" width="9" height="2.500" fill="#7cbf35"/></svg>
<svg style="left:705.7px;top:696.0px" width="16" height="16" viewBox="0 0 16 16"><path d="M0.500 3.500c0-.6.400-1 1-1h4l1.500 1.500h7.500c.6 0 1 .4 1 1V13c0 .6-.4 1-1 1h-13c-.6 0-1-.4-1-1z" fill="#f2b735"/><rect x="0.500" y="6" width="15" height="8" rx="1" fill="#fbd75b"/><rect x="4" y="10.500" width="8" height="3.500" fill="#2d8fe0"/></svg>
<svg style="left:735.7px;top:696.0px" width="16" height="16" viewBox="0 0 16 16"><circle cx="8" cy="8" r="7.500" fill="#6e3cc0"/><path d="M8 3.500c-2.500 0-4.300 1.800-4.300 4.200 0 1.900 1.200 3.400 2.900 4v-1.400c-1 .2-1.400-.500-1.400-.500.600 0 .9.500.9.500.500.800 1.300.600 1.600.400h1c.300.200 1.100.400 1.600-.400 0 0 .300-.500.900-.500 0 0-.400.700-1.400.500v1.400c1.700-.600 2.900-2.100 2.900-4 0-2.400-1.800-4.200-4.700-4.200z" fill="#fff"/><circle cx="8" cy="7.500" r="2.300" fill="#fff"/><path d="M5.400 4.200l.3 2h1.500zM10.600 4.200l-.3 2H8.800z" fill="#fff"/></svg>
<svg style="left:764.0px;top:695.5px" width="17" height="17" viewBox="0 0 16 16"><circle cx="8" cy="8" r="8" fill="#1d8ee6"/><path d="M2.500 8.500h9.500c.8 0 1.500-.5 1.800-1.200.4.200.9.100 1.200-.300-.3 1.800-1.500 4.500-5.500 4.500-3.500 0-5.500-1-7-3z" fill="#fff"/><g fill="#fff"><rect x="4" y="6.500" width="1.600" height="1.500"/><rect x="6" y="6.500" width="1.600" height="1.500"/><rect x="8" y="6.500" width="1.600" height="1.500"/><rect x="6" y="4.600" width="1.600" height="1.500"/><rect x="8" y="4.600" width="1.600" height="1.500"/></g></svg>
<div class="abs" style="left:794px;top:696px;width:16px;height:16px;border-radius:8px;background:conic-gradient(from -60deg,#ea4335 0 120deg,#fbbc05 120deg 240deg,#34a853 240deg 360deg)"></div><div class="abs" style="left:798.4px;top:700.400px;width:7.200px;height:7.200px;border-radius:3.600px;background:#4285f4;box-shadow:0 0 0 1.300px #fff"></div>
<div class="abs" style="left:804.500px;top:693px;width:8px;height:8px;border-radius:4px;background:#c2185b;box-shadow:0 0 0 1px #8a8f94"></div>
<svg style="left:823.5px;top:696.0px" width="16" height="16" viewBox="0 0 16 16"><circle cx="8" cy="8" r="7.300" fill="#1b1d21" stroke="#c9cdd1" stroke-width="1"/><path d="M8 8c0-2.500 1-4 2.500-4.500M8 8c2.200 1.200 3 2.800 2.700 4.400M8 8c-2.200 1.200-4 1.100-5.200 0" stroke="#c9cdd1" stroke-width="1.300" fill="none"/></svg>
<div class="abs" style="left:834px;top:693.500px;width:7.500px;height:7.500px;border-radius:3.800px;background:#f0141e"></div>
<svg style="left:852.6px;top:696.0px" width="16" height="16" viewBox="0 0 16 16"><circle cx="8" cy="8" r="8" fill="#f05a37"/><path d="M4 12l1-3 5.500-5.500 2 2L7 11z" fill="#fff"/></svg>
<svg style="left:882.0px;top:696.0px" width="16" height="16" viewBox="0 0 16 16"><rect x="0.800" y="0.800" width="14.400" height="14.400" fill="#3a3f44" stroke="#dfe3e6" stroke-width="1.200"/><rect x="3" y="3" width="3.300" height="6" fill="#e53935"/><rect x="6.300" y="3" width="3.300" height="6" fill="#fbc02d"/><rect x="9.600" y="3" width="3.300" height="6" fill="#1e88e5"/><rect x="3" y="10.500" width="4" height="2.800" fill="#cfd4d8"/><rect x="9" y="10.500" width="4" height="2.800" fill="#cfd4d8"/></svg>
<svg style="left:911.7px;top:696.0px" width="16" height="16" viewBox="0 0 16 16"><path d="M11.500 0.500L15.500 2.500v11l-4 2L3.500 9 1.500 10.600 0.300 10V6l1.200-.6L3.500 7zM11.500 4.800L7 8l4.500 3.200z" fill="#2a9df4"/></svg>
<svg style="left:940.0px;top:695.2px" width="17.5" height="17.5" viewBox="0 0 16 16"><circle cx="8" cy="8" r="8" fill="#1a73c9"/><path d="M0.500 7C1.500 3 4.500 0.500 8 0.500c4 0 7.500 3 7.500 6.500 0 2.500-2 3.800-4 3.800-1.500 0-2.300-.700-2.300-1.400 0-.400.400-.700.400-1.400 0-1.300-1.200-2.600-3.200-2.600C4 5.400 1.500 6 0.500 7z" fill="#3cc7e8"/><path d="M4.500 9.500c0 3 2.500 5.500 6 5.500 1.500 0 3-.500 4-1.500-1 2-3.500 3-6 3C4 16.500 1 13.500 1.500 10c.300-1.500 1.500-2.500 3-2.500-.200.600 0 1.300 0 2z" fill="#35c16b" opacity=".85"/></svg>
<svg style="left:970.2px;top:696.2px" width="15.5" height="15.5" viewBox="0 0 16 16"><defs><linearGradient id="ij" x1="0" y1="0" x2="1" y2="1"><stop offset="0" stop-color="#fc2f73"/><stop offset=".5" stop-color="#7b3ff2"/><stop offset="1" stop-color="#1a7ff0"/></linearGradient></defs><rect x="0" y="0" width="16" height="16" fill="url(#ij)"/><rect x="2.600" y="2.600" width="10.800" height="10.800" fill="#000"/><text x="4" y="8.500" font-family="Liberation Sans" font-weight="700" font-size="5" fill="#fff">IJ</text><rect x="4" y="11" width="4" height=".9" fill="#fff"/></svg>
<div class="abs" style="left:999px;top:696px;width:16px;height:16px;border-radius:8px;background:conic-gradient(from -60deg,#ea4335 0 120deg,#fbbc05 120deg 240deg,#34a853 240deg 360deg)"></div><div class="abs" style="left:1003.4px;top:700.400px;width:7.200px;height:7.200px;border-radius:3.600px;background:#4285f4;box-shadow:0 0 0 1.300px #fff"></div>
<div class="abs" style="left:1009px;top:695px;width:6px;height:6px;border-radius:3px;background:#3b2d24"></div>
<svg style="left:1028.8px;top:695.8px" width="16.5" height="16.5" viewBox="0 0 16 16"><circle cx="8.500" cy="8" r="7.500" fill="#e04a2f"/><path d="M8.500 0.500A7.500 7.500 0 0 1 16 8H8.500z" fill="#f47b5d"/><rect x="0" y="3.500" width="9" height="9" rx="1" fill="#c43621"/><text x="4.500" y="10.800" font-family="Liberation Sans" font-weight="700" font-size="7.500" fill="#fff" text-anchor="middle">P</text></svg>
<div class="abs" style="left:1058px;top:696px;width:16px;height:16px;border-radius:8px;background:conic-gradient(from -60deg,#ea4335 0 120deg,#fbbc05 120deg 240deg,#34a853 240deg 360deg)"></div><div class="abs" style="left:1062.4px;top:700.400px;width:7.200px;height:7.200px;border-radius:3.600px;background:#4285f4;box-shadow:0 0 0 1.300px #fff"></div>
<div class="abs" style="left:1068.500px;top:692.500px;width:8.500px;height:8.500px;border-radius:4.300px;background:radial-gradient(circle at 50% 45%,#caa08a 0 2px,#3a2f2f 2.200px 3.200px,#c9c9c9 3.600px)"></div>
<div class="abs" style="left:653.6px;top:715.400px;width:4px;height:1.500px;border-radius:1px;background:#8e979e"></div>
<div class="abs" style="left:711.7px;top:715.400px;width:4px;height:1.500px;border-radius:1px;background:#8e979e"></div>
<div class="abs" style="left:800px;top:715.400px;width:4px;height:1.500px;border-radius:1px;background:#8e979e"></div>
<div class="abs" style="left:829.5px;top:715.400px;width:4px;height:1.500px;border-radius:1px;background:#8e979e"></div>
<div class="abs" style="left:917.7px;top:715.400px;width:4px;height:1.500px;border-radius:1px;background:#8e979e"></div>
<div class="abs" style="left:1035px;top:715.400px;width:4px;height:1.500px;border-radius:1px;background:#8e979e"></div>
<div class="abs" style="left:1064px;top:715.400px;width:4px;height:1.500px;border-radius:1px;background:#8e979e"></div>
<svg style="left:1097px;top:706.500px" width="12" height="17" viewBox="0 0 12 17"><path d="M1 1v13.500l3.300-3.200 2.200 5 2-.9-2.200-4.900H11z" fill="#0b0b0b" stroke="#fff" stroke-width="1" stroke-linejoin="round"/></svg>
<svg style="left:1150.0px;top:699.0px" width="10" height="10" viewBox="0 0 10 10"><path d="M1.500 7L5 3.500 8.500 7" stroke="#fff" stroke-width="1.300" fill="none" stroke-linecap="round" stroke-linejoin="round"/></svg>
<svg style="left:1170.0px;top:698.0px" width="12" height="12" viewBox="0 0 16 16"><rect x="5.500" y="1" width="5" height="9" rx="2.500" fill="#2fbf5b"/><path d="M3.500 7.500c0 2.800 2 4.500 4.500 4.500s4.500-1.700 4.500-4.500M8 12v3" stroke="#2fbf5b" stroke-width="1.300" fill="none" stroke-linecap="round"/></svg>
<div class="t" style="left:1193.200px;top:695.700px;font-size:7.800px;color:#fff;letter-spacing:-0.1px">ENG</div>
<div class="t" style="left:1197.800px;top:706px;font-size:7.800px;color:#fff">IN</div>
<svg style="left:1220.0px;top:697.5px" width="12" height="12" viewBox="0 0 16 16"><path d="M1 6.200a10 10 0 0 1 14 0M3.300 8.700a6.600 6.600 0 0 1 9.400 0M5.600 11.100a3.400 3.400 0 0 1 4.800 0" stroke="#fff" stroke-width="1.300" fill="none" stroke-linecap="round"/><circle cx="8" cy="13.300" r="1.100" fill="#fff"/></svg>
<svg style="left:1236.5px;top:698.0px" width="12" height="12" viewBox="0 0 16 16"><path d="M1.500 6h2.500L7.500 3v10L4 10H1.500z" fill="none" stroke="#fff" stroke-width="1.200" stroke-linejoin="round"/><path d="M9.800 5.800a3 3 0 0 1 0 4.400M11.800 4a5.600 5.600 0 0 1 0 8M13.700 2.500a8 8 0 0 1 0 11" stroke="#fff" stroke-width="1.100" fill="none" stroke-linecap="round"/></svg>
<svg style="left:1255.0px;top:698.0px" width="12" height="12" viewBox="0 0 16 16"><path d="M8 2a4.200 4.200 0 0 0-4.200 4.200c0 3-1.300 4-1.800 4.800h12c-.5-.8-1.800-1.800-1.800-4.800A4.200 4.200 0 0 0 8 2zM6.300 13a1.800 1.800 0 0 0 3.400 0" stroke="#fff" stroke-width="1.300" fill="none" stroke-linejoin="round" stroke-linecap="round"/></svg>
<!-- TASKBAR-CONTENT -->
</body>
</html>
